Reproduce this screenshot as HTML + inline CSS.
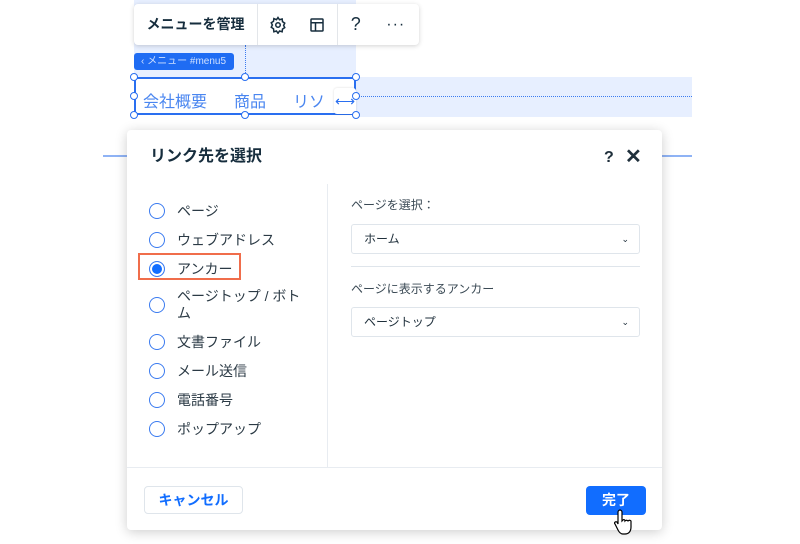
<!DOCTYPE html>
<html><head><meta charset="utf-8"><style>
*{box-sizing:border-box;margin:0;padding:0}
body{width:800px;height:544px;background:#fff;position:relative;overflow:hidden;font-family:"Liberation Sans","Noto Sans CJK JP",sans-serif;color:#20303c}
.abs{position:absolute}
</style></head><body>
<div class="abs" style="left:134px;top:0;width:222px;height:77px;background:#e7efff"></div>
<div class="abs" style="left:356px;top:77px;width:336px;height:40px;background:#e7efff"></div>
<div class="abs" style="left:357px;top:96px;width:335px;border-top:1px dotted #3b7bf0"></div>
<div class="abs" style="left:245px;top:45px;height:32px;border-left:1px dotted #3b7bf0"></div>
<div class="abs" style="left:103px;top:155px;width:589px;height:2px;background:#8fb3f5"></div>
<!-- toolbar -->
<div class="abs" style="left:134px;top:4px;width:285px;height:41px;background:#fff;border-radius:4px;box-shadow:0 1px 5px rgba(0,0,0,.18);display:flex;align-items:center;font-size:14px;font-weight:bold;color:#162d3d">
<div style="width:124px;text-align:center;border-right:1px solid #e3e6ea;height:41px;line-height:41px">メニューを管理</div>
<div style="width:80px;display:flex;justify-content:space-around;border-right:1px solid #e3e6ea;height:41px;align-items:center">
<svg width="18" height="18" viewBox="0 0 24 24" fill="none" stroke="#162d3d" stroke-width="2"><circle cx="12" cy="12" r="3"/><path d="M12 2l2 3 3.5-1 .5 3.5 3 2-1.5 3 1.5 3-3 2-.5 3.5-3.5-1-2 3-2-3-3.5 1L6 17l-3-2 1.5-3L3 9l3-2 .5-3.5L10 5z"/></svg>
<svg width="18" height="18" viewBox="0 0 24 24" fill="none" stroke="#162d3d" stroke-width="2"><rect x="4" y="4" width="16" height="16" rx="1"/><path d="M4 9h16M10 9v11"/></svg></div>
<div style="width:80px;display:flex;justify-content:space-around;align-items:center;font-size:18px;font-weight:normal"><span>?</span><span style="font-size:16px;letter-spacing:1px">···</span></div>
</div>
<div class="abs" style="left:134px;top:53px;width:100px;height:17px;background:#1f6cf3;border-radius:3px;color:#cfe0ff;font-size:10px;line-height:17px;padding-left:7px">‹ メニュー #menu5</div>
<!-- menu box -->
<div class="abs" style="left:134px;top:77px;width:222px;height:38px;border:2px solid #2a6ff0;background:#fff"></div>
<div class="abs" style="left:143px;top:88px;font-size:16px;color:#4a86f0">会社概要</div>
<div class="abs" style="left:234px;top:88px;font-size:16px;color:#4a86f0">商品</div>
<div class="abs" style="left:293px;top:88px;font-size:16px;color:#4a86f0">リソ</div>
<div class="abs" style="left:334px;top:88px;width:22px;height:26px;background:#fff;border-radius:3px;color:#2a6ff0;font-size:14px;text-align:center;line-height:26px;box-shadow:0 0 2px rgba(0,0,0,.15)">⟷</div>
<div class="abs" style="left:130px;top:73px;width:8px;height:8px;border:1px solid #2a6ff0;border-radius:50%;background:#fff"></div>
<div class="abs" style="left:241px;top:73px;width:8px;height:8px;border:1px solid #2a6ff0;border-radius:50%;background:#fff"></div>
<div class="abs" style="left:352px;top:73px;width:8px;height:8px;border:1px solid #2a6ff0;border-radius:50%;background:#fff"></div>
<div class="abs" style="left:130px;top:92px;width:8px;height:8px;border:1px solid #2a6ff0;border-radius:50%;background:#fff"></div>
<div class="abs" style="left:352px;top:92px;width:8px;height:8px;border:1px solid #2a6ff0;border-radius:50%;background:#fff"></div>
<div class="abs" style="left:130px;top:111px;width:8px;height:8px;border:1px solid #2a6ff0;border-radius:50%;background:#fff"></div>
<div class="abs" style="left:241px;top:111px;width:8px;height:8px;border:1px solid #2a6ff0;border-radius:50%;background:#fff"></div>
<div class="abs" style="left:352px;top:111px;width:8px;height:8px;border:1px solid #2a6ff0;border-radius:50%;background:#fff"></div>
<!-- dialog -->
<div class="abs" style="left:127px;top:130px;width:535px;height:400px;background:#fff;border-radius:4px;box-shadow:0 2px 12px rgba(0,0,0,.2)">
<div class="abs" style="left:23px;top:17px;font-size:16px;font-weight:bold;color:#162d3d;line-height:20px">リンク先を選択</div>
<div class="abs" style="left:477px;top:18px;font-size:16px;font-weight:bold;line-height:20px">?</div>
<div class="abs" style="left:498px;top:16px;font-size:20px;font-weight:bold;line-height:22px">✕</div>
<div class="abs" style="left:200px;top:54px;width:1px;height:284px;background:#e8ecf1"></div>
<div class="abs" style="left:0;top:337px;width:535px;height:1px;background:#e8ecf1"></div>
<div class="abs" style="left:11px;top:123px;width:103px;height:27px;border:2px solid #f06d4b"></div>
<div style="position:absolute;left:22px;top:66px;font-size:14px;color:#2b3a45">
<div style="height:29px;display:flex;align-items:center"><span style="width:16px;height:16px;border:1.5px solid #3b7bf0;border-radius:50%;margin-right:12px"></span>ページ</div>
<div style="height:29px;display:flex;align-items:center"><span style="width:16px;height:16px;border:1.5px solid #3b7bf0;border-radius:50%;margin-right:12px"></span>ウェブアドレス</div>
<div style="height:29px;display:flex;align-items:center"><span style="width:16px;height:16px;border:1.5px solid #3b7bf0;border-radius:50%;margin-right:12px;background:#116dff;box-shadow:inset 0 0 0 2px #fff"></span>アンカー</div>
<div style="height:44px;display:flex;align-items:center"><span style="width:16px;height:16px;border:1.5px solid #3b7bf0;border-radius:50%;margin-right:12px;flex:none"></span><span style="width:130px;line-height:17px">ページトップ / ボトム</span></div>
<div style="height:29px;display:flex;align-items:center"><span style="width:16px;height:16px;border:1.5px solid #3b7bf0;border-radius:50%;margin-right:12px"></span>文書ファイル</div>
<div style="height:29px;display:flex;align-items:center"><span style="width:16px;height:16px;border:1.5px solid #3b7bf0;border-radius:50%;margin-right:12px"></span>メール送信</div>
<div style="height:29px;display:flex;align-items:center"><span style="width:16px;height:16px;border:1.5px solid #3b7bf0;border-radius:50%;margin-right:12px"></span>電話番号</div>
<div style="height:29px;display:flex;align-items:center"><span style="width:16px;height:16px;border:1.5px solid #3b7bf0;border-radius:50%;margin-right:12px"></span>ポップアップ</div>
</div>
<div class="abs" style="left:224px;top:66px;font-size:12px;color:#3b4a55">ページを選択：</div>
<div class="abs" style="left:224px;top:94px;width:289px;height:30px;border:1px solid #dfe5eb;border-radius:3px;font-size:12px;line-height:28px;padding-left:12px">ホーム<span style="position:absolute;right:10px;font-size:9px">⌄</span></div>
<div class="abs" style="left:224px;top:136px;width:289px;height:1px;background:#dfe5eb"></div>
<div class="abs" style="left:224px;top:150px;font-size:12px;color:#3b4a55">ページに表示するアンカー</div>
<div class="abs" style="left:224px;top:177px;width:289px;height:30px;border:1px solid #dfe5eb;border-radius:3px;font-size:12px;line-height:28px;padding-left:12px">ページトップ<span style="position:absolute;right:10px;font-size:9px">⌄</span></div>
<div class="abs" style="left:17px;top:356px;width:99px;height:28px;border:1px solid #dfe5eb;border-radius:4px;color:#116dff;font-size:14px;font-weight:bold;text-align:center;line-height:26px">キャンセル</div>
<div class="abs" style="left:459px;top:356px;width:60px;height:29px;background:#116dff;border-radius:4px;color:#fff;font-size:14px;font-weight:bold;text-align:center;line-height:29px">完了</div>
</div>
<svg class="abs" style="left:614px;top:508px" width="22" height="28" viewBox="0 0 22 28"><path d="M6 2c1 0 2 1 2 2v9l1-1c1-1 2 0 2 1 1-1 2-1 3 0 1-1 2-1 3 0v6c0 4-2 7-6 7h-2c-2 0-4-2-5-4L1 16c-1-1 0-3 2-2l1 2V4c0-1 1-2 2-2z" fill="#fff" stroke="#000" stroke-width="1.2"/></svg>
</body></html>
